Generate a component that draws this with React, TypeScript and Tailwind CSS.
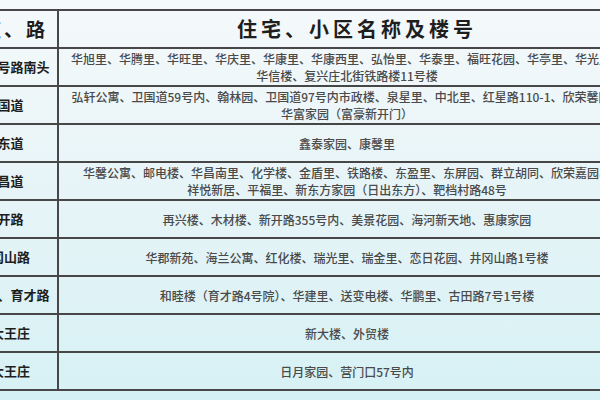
import React from 'react';

type Row = { road: string; lines: string[] };

const rows: Row[] = [
  {
    road: '二十一号路南头',
    lines: [
      '华旭里、华腾里、华旺里、华庆里、华康里、华康西里、弘怡里、华泰里、福旺花园、华亭里、华光里、',
      '华信楼、复兴庄北街铁路楼11号楼',
    ],
  },
  {
    road: '卫国道',
    lines: [
      '弘轩公寓、卫国道59号内、翰林园、卫国道97号内市政楼、泉星里、中北里、红星路110-1、欣荣馨园、',
      '华富家园（富豪新开门）',
    ],
  },
  { road: '华东道', lines: ['鑫泰家园、康馨里'] },
  {
    road: '华昌道',
    lines: [
      '华馨公寓、邮电楼、华昌南里、化学楼、金盾里、铁路楼、东盈里、东屏园、群立胡同、欣荣嘉园、',
      '祥悦新居、平福里、新东方家园（日出东方）、靶档村路48号',
    ],
  },
  { road: '新开路', lines: ['再兴楼、木材楼、新开路355号内、美景花园、海河新天地、惠康家园'] },
  { road: '井冈山路', lines: ['华郡新苑、海兰公寓、红化楼、瑞光里、瑞金里、恋日花园、井冈山路1号楼'] },
  { road: '西湖道、育才路', lines: ['和睦楼（育才路4号院）、华建里、送变电楼、华鹏里、古田路7号1号楼'] },
  { road: '北大王庄', lines: ['新大楼、外贸楼'] },
  { road: '南大王庄', lines: ['日月家园、营门口57号内'] },
];

export default function App() {
  return (
    <div className="w-[600px] h-[400px] overflow-hidden bg-gradient-to-b from-[#f5f9fb] via-[#e6f4f7] to-[#d6f1f5] font-['Noto_Sans_CJK_SC','Noto_Sans',sans-serif]">
      <div className="ml-[-49px] mt-[9px] w-[686px] border-t-2 border-[#474747]">
        {/* header */}
        <div className="flex h-[38px] border-b-2 border-[#474747]">
          <div className="w-[106px] shrink-0 flex items-center justify-center whitespace-nowrap text-[19px] font-bold tracking-[3px] text-[#1e1e1e]">
            街道、路
          </div>
          <div className="w-[578px] shrink-0 border-l-2 border-[#474747] flex items-center justify-center pl-[20px] whitespace-nowrap text-[20px] font-bold tracking-[4px] text-[#1e1e1e]">
            住宅、小区名称及楼号
          </div>
        </div>

        {rows.map((row) => (
          <div key={row.road} className="flex h-[38px] border-b-2 border-[#474747]">
            <div className="w-[106px] shrink-0 flex items-center justify-center whitespace-nowrap text-[13px] font-bold text-[#1e1e1e]">
              {row.road}
            </div>
            <div className="w-[578px] shrink-0 border-l-2 border-[#474747] flex flex-col items-center justify-center whitespace-nowrap text-center text-[12px] leading-[17px] font-medium text-[#4a4a4a]">
              {row.lines.map((line) => (
                <span key={line}>{line}</span>
              ))}
            </div>
          </div>
        ))}
      </div>
    </div>
  );
}
